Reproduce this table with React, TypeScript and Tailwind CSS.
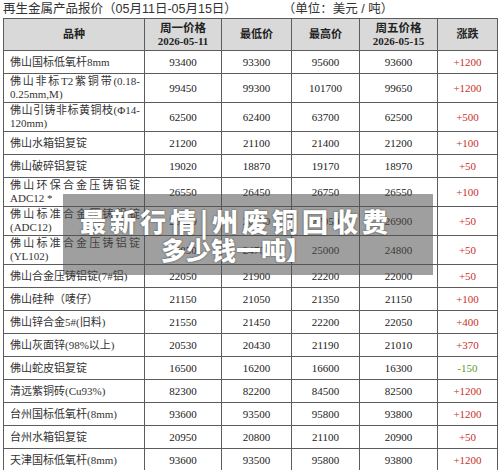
import React from "react"

type Row = {
  name: string[]
  mon: string
  low: string
  high: string
  fri: string
  diff: string
}

const rows: Row[] = [
  { name: ["佛山国标低氧杆8mm"], mon: "93400", low: "93300", high: "95600", fri: "93600", diff: "+1200" },
  { name: ["佛山非标T2紫铜带(0.18-", "0.25mm,M)"], mon: "99450", low: "99300", high: "101700", fri: "99650", diff: "+1200" },
  { name: ["佛山引铸非标黄铜枝(Φ14-", "120mm)"], mon: "62500", low: "62400", high: "63700", fri: "62500", diff: "+500" },
  { name: ["佛山水箱铝复锭"], mon: "21200", low: "21100", high: "21400", fri: "21200", diff: "+100" },
  { name: ["佛山破碎铝复锭"], mon: "19020", low: "18870", high: "19170", fri: "18970", diff: "+50" },
  { name: ["佛山环保合金压铸铝锭", "ADC12 *"], mon: "26550", low: "26450", high: "26750", fri: "26550", diff: "+100" },
  { name: ["佛山标准合金压铸铝锭", "(ADC12)"], mon: "26850", low: "26750", high: "27050", fri: "26900", diff: "+50" },
  { name: ["佛山标准合金压铸铝锭", "(YL102)"], mon: "24850", low: "24700", high: "25000", fri: "24800", diff: "+50" },
  { name: ["佛山合金压铸铝锭(7#铝)"], mon: "22050", low: "21900", high: "22200", fri: "22000", diff: "+50" },
  { name: ["佛山硅种（唛仔）"], mon: "21150", low: "21050", high: "21350", fri: "21150", diff: "+100" },
  { name: ["佛山锌合金5#(旧料)"], mon: "21550", low: "21450", high: "22200", fri: "22050", diff: "+400" },
  { name: ["佛山灰面锌(98%以上)"], mon: "20530", low: "20430", high: "21190", fri: "21010", diff: "+370" },
  { name: ["佛山蛇皮铝复锭"], mon: "16500", low: "16200", high: "16600", fri: "16300", diff: "-150" },
  { name: ["清远紫铜砖(Cu93%)"], mon: "82300", low: "82200", high: "84500", fri: "82500", diff: "+1200" },
  { name: ["台州国标低氧杆(8mm)"], mon: "93600", low: "93500", high: "95800", fri: "93800", diff: "+1200" },
  { name: ["台州水箱铝复锭"], mon: "20950", low: "20800", high: "21100", fri: "20900", diff: "+50" },
  { name: ["天津国标低氧杆(8mm)"], mon: "93600", low: "93500", high: "95800", fri: "93800", diff: "+1200" },
]

const cell = "border border-[#5c5c5c] text-center align-middle"

export default function App() {
  return (
    <div
      className="relative w-[500px] h-[470px] overflow-hidden bg-white text-[#222]"
      style={{ fontFamily: '"Liberation Serif", "Noto Sans CJK SC", serif' }}
    >
      <div
        className="flex h-[18px] items-center pl-[3px] text-[12.5px] leading-none text-[#333]"
        style={{ fontFamily: '"Liberation Sans", "Noto Sans CJK SC", sans-serif' }}
      >
        <span>再生金属产品报价（05月11日-05月15日）</span>
        <span className="ml-[46px]">（单位：美元 / 吨）</span>
      </div>

      <table className="ml-[3px] w-[494px] table-fixed border-collapse text-[11px] leading-[13px]">
        <colgroup>
          <col className="w-[141px]" />
          <col className="w-[77px]" />
          <col className="w-[70px]" />
          <col className="w-[68px]" />
          <col className="w-[78px]" />
          <col className="w-[60px]" />
        </colgroup>
        <thead>
          <tr className="h-[32px] bg-[#d9d9d9] font-bold text-[#222]">
            <th className={cell}>品种</th>
            <th className={cell}>
              <div className="text-[11.5px]">周一价格</div>
              <div>2026-05-11</div>
            </th>
            <th className={cell}>最低价</th>
            <th className={cell}>最高价</th>
            <th className={cell}>
              <div className="text-[11.5px]">周五价格</div>
              <div>2026-05-15</div>
            </th>
            <th className={cell}>涨跌</th>
          </tr>
        </thead>
        <tbody>
          {rows.map((r, i) => (
            <tr key={i} className={r.name.length > 1 ? "h-[29px]" : "h-[23px]"}>
              <td className="border border-[#5c5c5c] pl-[6px] pr-[4px] text-left align-middle text-[#333]">
                {r.name.length > 1 ? (
                  <>
                    <div className="text-justify [text-align-last:justify]">{r.name[0]}</div>
                    <div>{r.name[1]}</div>
                  </>
                ) : (
                  r.name[0]
                )}
              </td>
              <td className={cell}>{r.mon}</td>
              <td className={cell}>{r.low}</td>
              <td className={cell}>{r.high}</td>
              <td className={cell}>{r.fri}</td>
              <td className={`${cell} ${r.diff.startsWith("-") ? "text-[#5f9a2c]" : "text-[#c9302c]"}`}>{r.diff}</td>
            </tr>
          ))}
        </tbody>
      </table>

      {/* watermark banner over the table */}
      <div
        className="absolute left-[63px] top-[194px] flex h-[81px] w-[370px] flex-col items-center justify-center bg-[rgba(80,80,80,0.55)] pr-[24px] font-black text-white"
        style={{ fontFamily: '"Noto Sans CJK SC", sans-serif', textShadow: "0 0 2px rgba(0,0,0,0.6)" }}
      >
        <div className="text-[26px] leading-[29px] tracking-[4px]">最新行情|州废铜回收费</div>
        <div className="text-[25px] leading-[29px]">多少钱一吨】</div>
      </div>
    </div>
  )
}
